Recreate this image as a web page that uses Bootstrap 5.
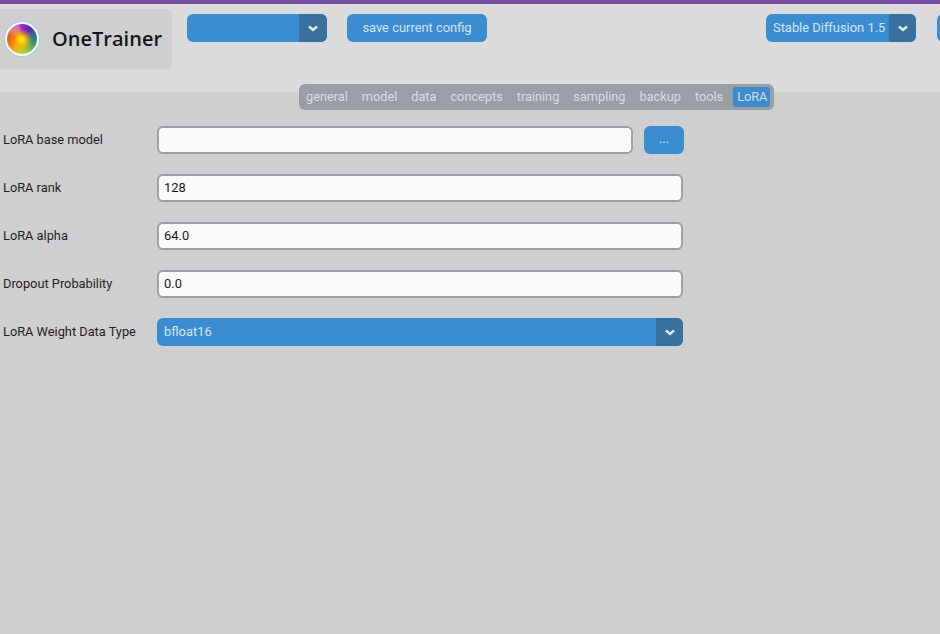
<!DOCTYPE html>
<html lang="en">
<head>
<meta charset="utf-8">
<title>OneTrainer</title>
<link href="https://cdn.jsdelivr.net/npm/bootstrap@5.3.0/dist/css/bootstrap.min.css" rel="stylesheet">
<style>
html,body{height:100%;overflow:hidden}
body{background:#cfcfcf;font-family:Roboto,"Liberation Sans",sans-serif;font-size:12.9px;color:#1a1a1a;width:940px}
.topline{height:4px;background:#7750a6}
.apphead{height:88px;background:#dbdbdb;padding-left:0;overflow:hidden}
.logobox{width:172px;height:60px;margin-top:5px;background:#cfcfcf;border-radius:0 5px 5px 0;padding-left:5px;flex:none}
.logoimg{width:34px;height:34px;border-radius:50%;border:2px solid #f4fbfc;box-shadow:0 0 1px 1px #9fd0dc;flex:none;
 background:radial-gradient(circle at 48% 52%,#fff200 0,#ffd000 14%,rgba(255,170,0,.6) 30%,rgba(255,150,0,0) 50%),conic-gradient(from 0deg,#a020e0 0,#5a2ab8 10%,#2a6f9a 20%,#3f9570 30%,#8fc040 42%,#c8d020 52%,#e8b010 60%,#ee7010 70%,#e0641c 78%,#e8806a 86%,#d878b0 94%,#a020e0 100%)}
.logotext{font-family:"Open Sans",Roboto,sans-serif;font-weight:600;font-size:20px;color:#14181c;margin-left:13px;letter-spacing:.02px}
.btnblue{background:#3a8dd1;color:#d6e4f0;border:0;border-radius:6px;height:28px;font-size:12.9px;padding:0;display:flex;align-items:center;justify-content:center;flex:none}
.btnblue:hover,.btnblue:focus{background:#3a8dd1;color:#d6e4f0}
.picker{display:flex;align-items:stretch;background:#3a8dd1;color:#d6e4f0;border-radius:6px;height:28px;overflow:hidden;flex:none}
.pickerval{flex:1;padding-left:7px;line-height:27px;white-space:nowrap}
.pickerarrow{width:27px;background:#36719f;display:flex;align-items:center;justify-content:center;flex:none}
.pick1 .pickerarrow{width:28px}
.pickerarrow svg{width:10px;height:7px;margin-top:1px}
.pick1{width:140px;margin-left:15px;margin-top:10px}
.savebtn{width:140px;margin-left:20px;margin-top:10px}
.pick2{width:150px;margin-left:279px;margin-top:10px}
.clipbtn{width:60px;margin-left:21px;margin-top:10px}
.tabstrip{margin-left:299px;margin-top:-8px;width:475px;height:26px;background:#9a9ea5;border-radius:6px;padding:3px 3px 3px 0;position:relative;color:#d8dde4;font-size:12.74px}
.tabitem{line-height:20px;padding:0 7px;white-space:nowrap}
.tabitem.sel{background:#3a8dd1;border-radius:3px;padding:0 3px 0 4px;margin-left:3px;height:20px}
.formarea{padding-top:16px;padding-left:3px}
.frow{height:28px;margin-bottom:20px;display:flex;align-items:center}
.flabel{width:154px;flex:none;font-size:12.8px;color:#1f1f1f}
.finput{height:28px;background:#fafafa;border:2px solid #9a9ea5;border-radius:6px;color:#14181c;font-size:12.9px;padding:0 5px 2px;outline:0;flex:none}
.w476{width:476px}
.w526{width:526px}
.dots{width:40px;margin-left:11px;padding-bottom:2px}
.pickwide{width:526px}
</style>
</head>
<body>
<div class="topline"></div>
<header class="apphead d-flex align-items-start">
  <div class="logobox d-flex align-items-center">
    <div class="logoimg"></div>
    <span class="logotext">OneTrainer</span>
  </div>
  <div class="picker pick1"><div class="pickerval"></div><div class="pickerarrow"><svg viewBox="0 0 10 7"><path d="M1 1.5 5 5 9 1.5" fill="none" stroke="#e4eef6" stroke-width="2.4"/></svg></div></div>
  <button type="button" class="btn btnblue savebtn">save current config</button>
  <div class="picker pick2"><div class="pickerval">Stable Diffusion 1.5</div><div class="pickerarrow"><svg viewBox="0 0 10 7"><path d="M1 1.5 5 5 9 1.5" fill="none" stroke="#e4eef6" stroke-width="2.4"/></svg></div></div>
  <div class="btnblue clipbtn"></div>
</header>
<nav class="tabstrip d-flex align-items-center">
  <div class="tabitem">general</div>
  <div class="tabitem">model</div>
  <div class="tabitem">data</div>
  <div class="tabitem">concepts</div>
  <div class="tabitem">training</div>
  <div class="tabitem">sampling</div>
  <div class="tabitem">backup</div>
  <div class="tabitem">tools</div>
  <div class="tabitem sel">LoRA</div>
</nav>
<main class="formarea">
  <div class="frow"><div class="flabel">LoRA base model</div><input class="finput w476" type="text" value=""><button type="button" class="btn btnblue dots">...</button></div>
  <div class="frow"><div class="flabel">LoRA rank</div><input class="finput w526" type="text" value="128"></div>
  <div class="frow"><div class="flabel">LoRA alpha</div><input class="finput w526" type="text" value="64.0"></div>
  <div class="frow"><div class="flabel">Dropout Probability</div><input class="finput w526" type="text" value="0.0"></div>
  <div class="frow"><div class="flabel">LoRA Weight Data Type</div><div class="picker pickwide"><div class="pickerval">bfloat16</div><div class="pickerarrow"><svg viewBox="0 0 10 7"><path d="M1 1.5 5 5 9 1.5" fill="none" stroke="#e4eef6" stroke-width="2.4"/></svg></div></div></div>
</main>
<script src="https://cdn.jsdelivr.net/npm/bootstrap@5.3.0/dist/js/bootstrap.bundle.min.js"></script>
</body>
</html>
